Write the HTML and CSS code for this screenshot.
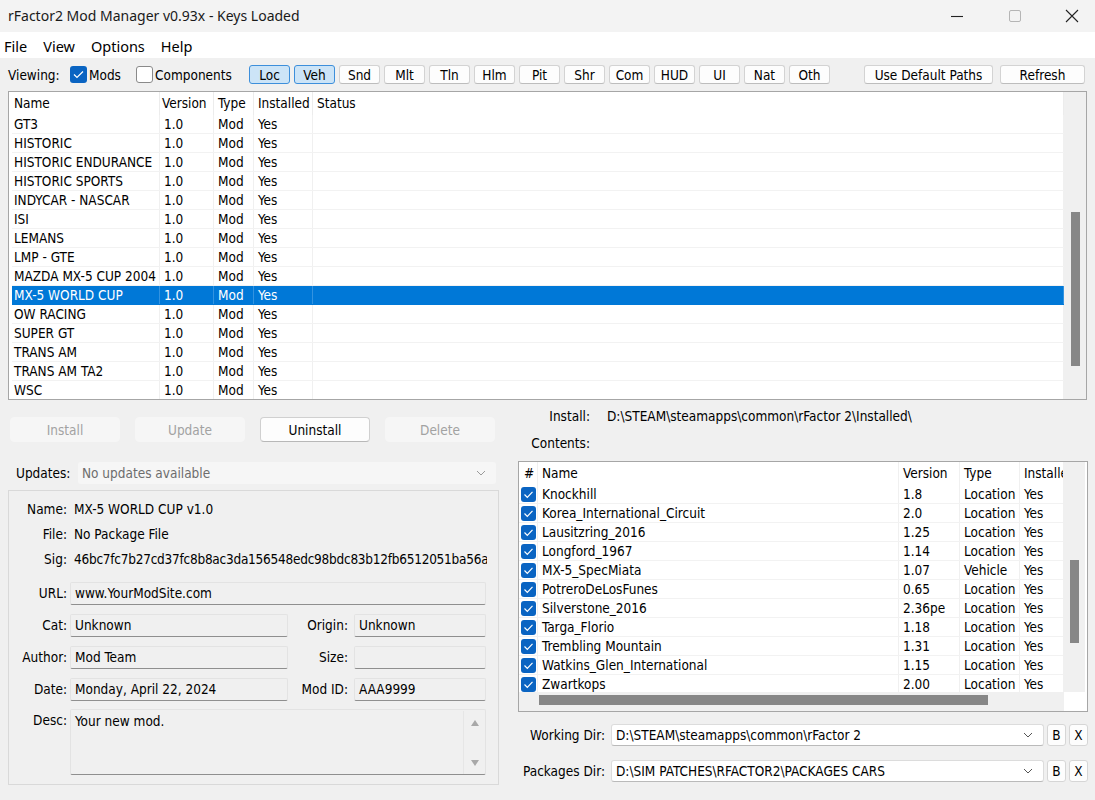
FILE: index.html
```html
<!DOCTYPE html>
<html>
<head>
<meta charset="utf-8">
<link rel="stylesheet" href="styles.css">
</head>
<body>
<div class="titlebar">
  <span class="title">rFactor2 Mod Manager v0.93x - Keys Loaded</span>
  <div class="winctl">
    <div class="ctl"><svg width="16" height="16" viewBox="0 0 16 16"><path d="M2 8.5h12" stroke="#222" stroke-width="1.1"/></svg></div>
    <div class="ctl"><svg width="14" height="14" viewBox="0 0 14 14"><rect x="1.5" y="1.5" width="11" height="11" rx="1.5" fill="none" stroke="#b5b5b5" stroke-width="1"/></svg></div>
    <div class="ctl close"><svg width="14" height="14" viewBox="0 0 14 14"><path d="M1 1L13 13M13 1L1 13" stroke="#222" stroke-width="1.1"/></svg></div>
  </div>
</div>
<div class="menubar">
  <span class="mi">File</span><span class="mi">View</span><span class="mi">Options</span><span class="mi">Help</span>
</div>
<div class="toolbar">
  <span class="lbl">Viewing:</span>
  <span class="chk on"><svg width="11" height="9" viewBox="0 0 11 9"><path d="M1 4.5L4 7.5L10 1.5" fill="none" stroke="#fff" stroke-width="1.2"/></svg></span>
  <span class="chklbl mods">Mods</span>
  <span class="chk off"></span>
  <span class="chklbl comps">Components</span>
  <div class="filters">
    <span class="fb act">Loc</span><span class="fb act">Veh</span><span class="fb">Snd</span><span class="fb">Mlt</span><span class="fb">Tln</span><span class="fb">Hlm</span><span class="fb">Pit</span><span class="fb">Shr</span><span class="fb">Com</span><span class="fb">HUD</span><span class="fb">UI</span><span class="fb">Nat</span><span class="fb">Oth</span>
  </div>
  <span class="fb wide1">Use Default Paths</span>
  <span class="fb wide2">Refresh</span>
</div>

<div class="modlist">
  <div class="ml-body">
    <div class="mrow head"><span>Name</span><span>Version</span><span>Type</span><span>Installed</span><span>Status</span></div>
    <div class="mrow"><span>GT3</span><span>1.0</span><span>Mod</span><span>Yes</span><span></span></div>
    <div class="mrow"><span>HISTORIC</span><span>1.0</span><span>Mod</span><span>Yes</span><span></span></div>
    <div class="mrow"><span>HISTORIC ENDURANCE</span><span>1.0</span><span>Mod</span><span>Yes</span><span></span></div>
    <div class="mrow"><span>HISTORIC SPORTS</span><span>1.0</span><span>Mod</span><span>Yes</span><span></span></div>
    <div class="mrow"><span>INDYCAR - NASCAR</span><span>1.0</span><span>Mod</span><span>Yes</span><span></span></div>
    <div class="mrow"><span>ISI</span><span>1.0</span><span>Mod</span><span>Yes</span><span></span></div>
    <div class="mrow"><span>LEMANS</span><span>1.0</span><span>Mod</span><span>Yes</span><span></span></div>
    <div class="mrow"><span>LMP - GTE</span><span>1.0</span><span>Mod</span><span>Yes</span><span></span></div>
    <div class="mrow"><span>MAZDA MX-5 CUP 2004</span><span>1.0</span><span>Mod</span><span>Yes</span><span></span></div>
    <div class="mrow sel"><span>MX-5 WORLD CUP</span><span>1.0</span><span>Mod</span><span>Yes</span><span></span></div>
    <div class="mrow"><span>OW RACING</span><span>1.0</span><span>Mod</span><span>Yes</span><span></span></div>
    <div class="mrow"><span>SUPER GT</span><span>1.0</span><span>Mod</span><span>Yes</span><span></span></div>
    <div class="mrow"><span>TRANS AM</span><span>1.0</span><span>Mod</span><span>Yes</span><span></span></div>
    <div class="mrow"><span>TRANS AM TA2</span><span>1.0</span><span>Mod</span><span>Yes</span><span></span></div>
    <div class="mrow"><span>WSC</span><span>1.0</span><span>Mod</span><span>Yes</span><span></span></div>
  </div>
  <div class="vscroll ml-vs"><div class="thumb"></div></div>
</div>

<div class="lower">
  <div class="left">
    <div class="actions">
      <span class="btn dis">Install</span>
      <span class="btn dis">Update</span>
      <span class="btn">Uninstall</span>
      <span class="btn dis">Delete</span>
    </div>
    <div class="updates">
      <span class="ulbl">Updates:</span>
      <div class="combo discombo"><span>No updates available</span><svg class="chev" width="10" height="6" viewBox="0 0 10 6"><path d="M1 1L5 5L9 1" fill="none" stroke="#9a9a9a" stroke-width="1"/></svg></div>
    </div>
    <div class="group">
      <div class="irow"><span class="flbl">Name:</span><span class="ival">MX-5 WORLD CUP v1.0</span></div>
      <div class="irow"><span class="flbl">File:</span><span class="ival">No Package File</span></div>
      <div class="irow"><span class="flbl">Sig:</span><span class="ival sig">46bc7fc7b27cd37fc8b8ac3da156548edc98bdc83b12fb6512051ba56ab</span></div>
      <div class="frow url"><span class="flbl">URL:</span><div class="field full">www.YourModSite.com</div></div>
      <div class="frow"><span class="flbl">Cat:</span><div class="field half">Unknown</div><span class="flbl2">Origin:</span><div class="field small">Unknown</div></div>
      <div class="frow"><span class="flbl">Author:</span><div class="field half">Mod Team</div><span class="flbl2">Size:</span><div class="field small"></div></div>
      <div class="frow"><span class="flbl">Date:</span><div class="field half">Monday, April 22, 2024</div><span class="flbl2">Mod ID:</span><div class="field small">AAA9999</div></div>
      <div class="frow desc"><span class="flbl">Desc:</span>
        <div class="field full area"><span class="atext">Your new mod.</span>
          <div class="ascroll">
            <svg width="10" height="8" viewBox="0 0 10 8"><path d="M1 7L5 1L9 7Z" fill="#a8a8a8"/></svg>
            <svg width="10" height="8" viewBox="0 0 10 8"><path d="M1 1L5 7L9 1Z" fill="#a8a8a8"/></svg>
          </div>
        </div>
      </div>
    </div>
  </div>

  <div class="right">
    <div class="prow"><span class="plbl">Install:</span><span class="pval">D:\STEAM\steamapps\common\rFactor 2\Installed\</span></div>
    <div class="prow contents"><span class="plbl">Contents:</span></div>
    <div class="clist">
      <div class="cl-main">
        <div class="cl-body">
          <div class="crow head"><span>#</span><span>Name</span><span>Version</span><span>Type</span><span>Installed</span></div>
          <div class="crow"><span><i class="cb"></i></span><span>Knockhill</span><span>1.8</span><span>Location</span><span>Yes</span></div>
          <div class="crow"><span><i class="cb"></i></span><span>Korea_International_Circuit</span><span>2.0</span><span>Location</span><span>Yes</span></div>
          <div class="crow"><span><i class="cb"></i></span><span>Lausitzring_2016</span><span>1.25</span><span>Location</span><span>Yes</span></div>
          <div class="crow"><span><i class="cb"></i></span><span>Longford_1967</span><span>1.14</span><span>Location</span><span>Yes</span></div>
          <div class="crow"><span><i class="cb"></i></span><span>MX-5_SpecMiata</span><span>1.07</span><span>Vehicle</span><span>Yes</span></div>
          <div class="crow"><span><i class="cb"></i></span><span>PotreroDeLosFunes</span><span>0.65</span><span>Location</span><span>Yes</span></div>
          <div class="crow"><span><i class="cb"></i></span><span>Silverstone_2016</span><span>2.36pe</span><span>Location</span><span>Yes</span></div>
          <div class="crow"><span><i class="cb"></i></span><span>Targa_Florio</span><span>1.18</span><span>Location</span><span>Yes</span></div>
          <div class="crow"><span><i class="cb"></i></span><span>Trembling Mountain</span><span>1.31</span><span>Location</span><span>Yes</span></div>
          <div class="crow"><span><i class="cb"></i></span><span>Watkins_Glen_International</span><span>1.15</span><span>Location</span><span>Yes</span></div>
          <div class="crow"><span><i class="cb"></i></span><span>Zwartkops</span><span>2.00</span><span>Location</span><span>Yes</span></div>
        </div>
        <div class="vscroll cl-vs"><div class="thumb"></div></div>
      </div>
      <div class="hscroll"><div class="hthumb"></div></div>
    </div>
    <div class="drow first"><span class="dlbl">Working Dir:</span><div class="combo dcombo"><span>D:\STEAM\steamapps\common\rFactor 2</span><svg class="chev" width="10" height="6" viewBox="0 0 10 6"><path d="M1 1L5 5L9 1" fill="none" stroke="#555" stroke-width="1"/></svg></div><span class="sb">B</span><span class="sb">X</span></div>
    <div class="drow"><span class="dlbl">Packages Dir:</span><div class="combo dcombo"><span>D:\SIM PATCHES\RFACTOR2\PACKAGES CARS</span><svg class="chev" width="10" height="6" viewBox="0 0 10 6"><path d="M1 1L5 5L9 1" fill="none" stroke="#555" stroke-width="1"/></svg></div><span class="sb">B</span><span class="sb">X</span></div>
  </div>
</div>
</body>
</html>
```
FILE: styles.css
```css
* { box-sizing: border-box; }
body {
  margin: 0;
  width: 1095px;
  height: 800px;
  overflow: hidden;
  background: #f0f0f0;
  color: #000;
  font-family: "DejaVu Sans Condensed", "DejaVu Sans", sans-serif;
  font-size: 13.5px;
}

/* title bar */
.titlebar {
  height: 32px;
  background: #f3f3f3;
  display: flex;
  align-items: center;
  font-family: "Noto Sans", "Open Sans", sans-serif;
  font-size: 14px;
  color: #1a1a1a;
}
.title { margin-left: 8px; margin-top: -2px; }
.winctl { margin-left: auto; display: flex; height: 32px; }
.ctl { width: 58px; height: 32px; display: flex; align-items: center; justify-content: center; }
.ctl.close { width: 51px; justify-content: flex-start; padding-left: 21px; }

/* menu */
.menubar {
  height: 26px;
  background: #fff;
  display: flex;
  align-items: center;
  padding-left: 4px;
  padding-top: 1px;
  gap: 16px;
  font-family: "Noto Sans", "Open Sans", sans-serif;
  font-size: 14.5px;
}

/* toolbar */
.toolbar {
  height: 32px;
  display: flex;
  align-items: center;
  padding-left: 8px;
  padding-top: 1px;
}
.lbl { width: 54px; white-space: nowrap; }
.chk {
  width: 17px; height: 17px; border-radius: 3px;
  display: inline-flex; align-items: center; justify-content: center;
  margin-left: 8px;
  flex: none;
}
.chk.on { background: #0a64c2; }
.chk.off { background: #fff; border: 1px solid #8a8a8a; margin-left: 15px; }
.chklbl { margin-left: 2px; white-space: nowrap; }
.chklbl.mods { width: 32px; }
.chklbl.comps { width: 74px; }
.filters { display: flex; gap: 4px; margin-left: 20px; }
.fb {
  height: 19px;
  width: 41px;
  display: inline-flex; align-items: center; justify-content: center;
  background: #fdfdfd;
  border: 1px solid #d3d3d3;
  border-bottom-color: #bdbdbd;
  border-radius: 3px;
  white-space: nowrap;
}
.fb.act { background: #cce4f7; border-color: #3d8fdb; }
.fb.wide1 { width: 129px; margin-left: 34px; }
.fb.wide2 { width: 85px; margin-left: 7px; }

/* mod list */
.modlist {
  margin: 1px 8px 0 8px;
  height: 309px;
  border: 1px solid #a6a6a6;
  background: #fff;
  display: flex;
}
.ml-body { flex: 1; padding-left: 3px; overflow: hidden; }
.mrow {
  display: grid;
  grid-template-columns: 148px 54px 40px 59px 1fr;
  height: 19px;
  line-height: 18px;
  border-bottom: 1px solid #f2f2f2;
}
.mrow span { padding-left: 4px; border-right: 1px solid #f0f0f0; white-space: nowrap; overflow: hidden; }
.mrow span:first-child { padding-left: 2px; }
.mrow.head { height: 23px; line-height: 22px; border-bottom: none; }
.mrow.head span { border-right-color: #ececec; }
.mrow.head span:nth-child(2) { padding-left: 2px; }
.mrow.sel { background: #0078d7; color: #fff; border-bottom-color: #0078d7; }
.mrow.sel span { border-right-color: #3393e0; }

.vscroll { width: 22px; background: #f0f0f0; display: flex; justify-content: center; }
.thumb { width: 9px; background: #878787; }
.ml-vs .thumb { margin-top: 120px; height: 154px; }

/* lower */
.lower { display: flex; }
.left { width: 510px; padding-left: 8px; }
.actions { display: flex; margin-top: 17px; padding-left: 2px; }
.btn {
  width: 110px; height: 25px;
  display: inline-flex; align-items: center; justify-content: center;
  background: #fdfdfd;
  border: 1px solid #d0d0d0;
  border-bottom-color: #b8b8b8;
  border-radius: 4px;
  margin-right: 15px;
}
.btn.dis { background: #f6f6f6; border-color: #f6f6f6; color: #a2a2a2; }

.updates { display: flex; align-items: center; margin-top: 20px; height: 22px; }
.ulbl { margin-left: 8px; width: 62px; }
.combo {
  display: flex; align-items: center;
  height: 22px;
  padding-left: 4px; padding-right: 10px;
  border-radius: 3px;
  white-space: nowrap;
}
.combo .chev { margin-left: auto; }
.discombo { width: 418px; background: #f6f6f6; color: #6d6d6d; }

.group {
  margin-top: 6px;
  width: 491px;
  height: 295px;
  border: 1px solid #d9d9d9;
  padding-top: 6px;
}
.irow { display: flex; height: 25px; line-height: 25px; }
.flbl { width: 58px; text-align: right; flex: none; }
.ival { margin-left: 7px; white-space: nowrap; }
.sig { overflow: hidden; width: 413px; letter-spacing: -0.25px; }
.frow { display: flex; height: 23px; margin-top: 9px; line-height: 20px; }
.frow.url { margin-top: 10px; }
.frow.desc { height: 66px; margin-top: 8px; }
.frow .flbl { line-height: 22px; }
.field {
  margin-left: 3px;
  background: #f0f0f0;
  border: 1px solid #e3e3e3;
  border-bottom: 1px solid #8f8f8f;
  border-radius: 2px;
  padding-left: 4px;
  white-space: nowrap;
}
.field.full { width: 416px; }
.field.half { width: 218px; }
.flbl2 { width: 60px; text-align: right; line-height: 22px; }
.field.small { width: 132px; margin-left: 6px; }
.area { display: flex; padding-top: 1px; }
.atext { flex: 1; }
.ascroll {
  width: 22px;
  border-left: 1px solid #e6e6e6;
  display: flex; flex-direction: column; align-items: center; justify-content: space-between;
  padding: 8px 0 7px;
}

/* right column */
.right { margin-left: 8px; width: 570px; }
.prow { display: flex; height: 20px; line-height: 20px; margin-top: 6px; }
.prow.contents { margin-top: 7px; }
.plbl { width: 72px; text-align: right; }
.pval { margin-left: 17px; white-space: nowrap; }
.clist {
  margin-top: 8px;
  width: 570px;
  height: 251px;
  border: 1px solid #a6a6a6;
  background: #fff;
  display: flex; flex-direction: column;
}
.cl-main { display: flex; height: 230px; }
.cl-body { width: 544px; overflow: hidden; }
.crow {
  display: grid;
  grid-template-columns: 19px 361px 61px 60px 60px;
  height: 19px;
  line-height: 18px;
  border-bottom: 1px solid #f2f2f2;
  white-space: nowrap;
}
.crow span { padding-left: 4px; border-right: 1px solid #f0f0f0; overflow: hidden; }
.crow span:first-child { padding-left: 2px; display: flex; align-items: center; }
.crow.head span:first-child { padding-left: 5px; display: block; }
.crow.head { height: 23px; line-height: 22px; border-bottom: none; }
.cb {
  display: inline-block;
  width: 15px; height: 15px;
  border-radius: 3px;
  background: #0a64c2 url("data:image/svg+xml;utf8,<svg xmlns='http://www.w3.org/2000/svg' width='15' height='15'><path d='M3.5 7.5L6.3 10.3L11.5 4.8' fill='none' stroke='white' stroke-width='1.2'/></svg>") no-repeat center;
}
.cl-vs { flex: none; }
.cl-vs .thumb { margin-top: 98px; height: 83px; }
.hscroll { height: 19px; background: #f0f0f0; padding-left: 20px; padding-top: 3px; width: 545px; }
.hthumb { width: 449px; height: 10px; background: #878787; }

.drow { display: flex; align-items: center; height: 22px; margin-top: 14px; }
.drow.first { margin-top: 12px; }
.dlbl { width: 87px; text-align: right; flex: none; }
.dcombo {
  margin-left: 6px; width: 433px;
  background: #fff;
  border: 1px solid #dcdcdc;
  border-bottom-color: #bababa;
}
.sb {
  width: 19px; height: 22px; margin-left: 3px;
  display: inline-flex; align-items: center; justify-content: center;
  background: #fdfdfd;
  border: 1px solid #d6d6d6;
  border-radius: 3px;
}
```
